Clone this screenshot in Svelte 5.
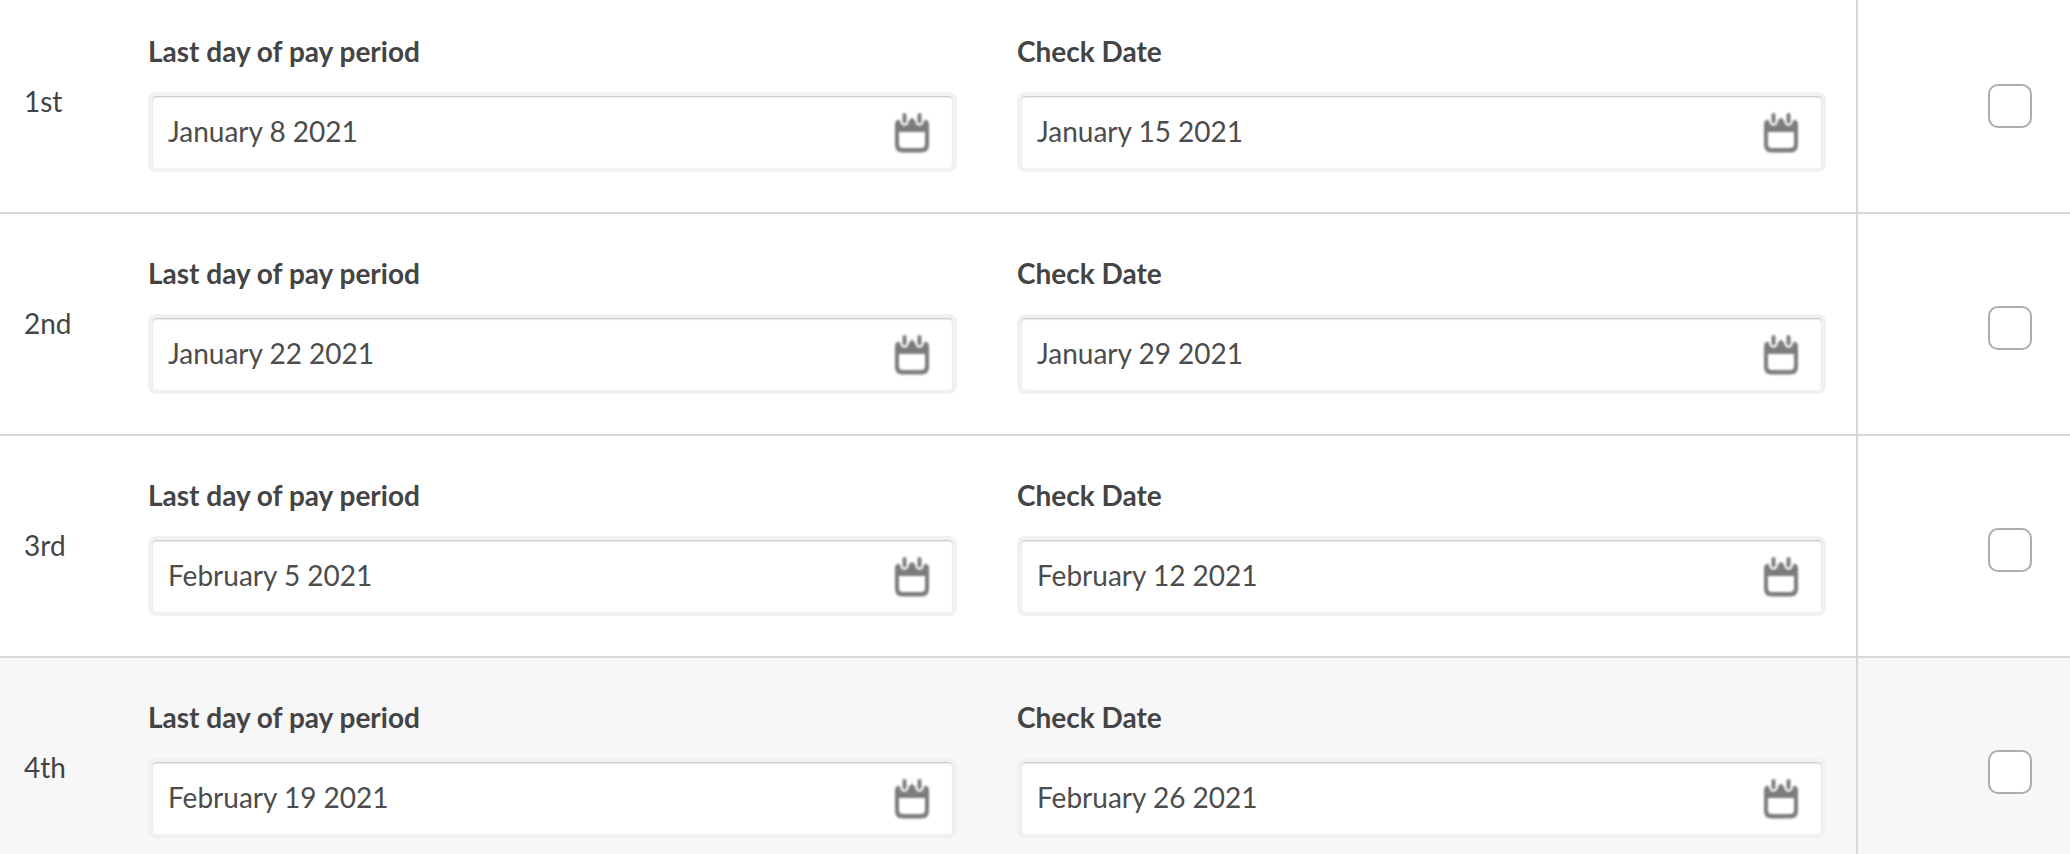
<script>
  let periods = $state([
    { name: '1st', lastDay: 'January 8 2021', checkDate: 'January 15 2021', selected: false },
    { name: '2nd', lastDay: 'January 22 2021', checkDate: 'January 29 2021', selected: false },
    { name: '3rd', lastDay: 'February 5 2021', checkDate: 'February 12 2021', selected: false },
    { name: '4th', lastDay: 'February 19 2021', checkDate: 'February 26 2021', selected: false, shaded: true }
  ]);

  const fields = [
    { key: 'lastDay', label: 'Last day of pay period' },
    { key: 'checkDate', label: 'Check Date' }
  ];
</script>

<main>
  <table>
    <tbody>
      {#each periods as period (period.name)}
        <tr class:shaded={period.shaded}>
          <th scope="row">{period.name}</th>
          <td class="dates">
            <div class="fields">
              {#each fields as field (field.key)}
                <div class="field">
                  <label for="{field.key}-{period.name}">{field.label}</label>
                  <div class="date-box">
                    <input type="text" id="{field.key}-{period.name}" bind:value={period[field.key]} />
                    <button type="button" aria-label="Open calendar">
                      <svg viewBox="0 0 34 42" width="34" height="42" aria-hidden="true">
                        <path
                          class="body"
                          fill-rule="evenodd"
                          d="M3 8.5 L5 9.5 C5.500 16.500 13.400 16.500 14 9.500 L17 6.500 L20 9.500 C20.600 16.500 28.500 16.500 29 9.500 L31 8.500 Q34 10 34 12.500 V34 Q34 41.500 26.500 41.500 H7.500 Q0 41.500 0 34 V12.500 Q0 10 3 8.500 Z M4 21 V33 Q4 37 8 37 H26 Q30 37 30 33 V21 Z"
                        />
                        <path class="ring" d="M9.500 4 V10.500 M24.500 4 V10.500" />
                      </svg>
                    </button>
                  </div>
                </div>
              {/each}
            </div>
          </td>
          <td class="select">
            <input type="checkbox" aria-label="Select" bind:checked={period.selected} />
          </td>
        </tr>
      {/each}
    </tbody>
  </table>
</main>

<style>
  :global(body) {
    background: #fff;
  }

  main {
    height: 100vh;
    overflow: hidden;
    color: #444;
    font-family: Lato, sans-serif;
    font-size: 28px;
    line-height: 34px;
  }

  table {
    width: 100%;
    margin-top: -8px;
    border-spacing: 0;
  }

  th,
  td {
    padding: 0;
    border-bottom: 2px solid #d8d8d8;
  }

  .shaded {
    background: #f7f7f7;
  }

  th {
    width: 124px;
    padding: 0 0 2px 24px;
    font-weight: 400;
    text-align: left;
    vertical-align: middle;
  }

  .dates {
    padding: 42px 30px 40px 0;
    border-right: 2px solid #d8d8d8;
  }

  .fields {
    display: flex;
    gap: 60px;
  }

  .field {
    display: flex;
    flex: 1;
    flex-direction: column;
    gap: 24px;
    min-width: 0;
  }

  label {
    font-weight: 700;
  }

  .date-box {
    display: flex;
    align-items: center;
    box-sizing: border-box;
    height: 80px;
    padding: 0 24px 0 16px;
    border: 4px solid #f1f1f1;
    border-radius: 8px;
    background: #fff;
    box-shadow: inset 0 1px 2px #bbb;
  }

  .date-box input {
    flex: 1;
    min-width: 0;
    padding: 0 0 2px;
    border: 0;
    outline: 0;
    background: none;
    color: #4c4c4c;
    font: inherit;
  }

  button {
    display: flex;
    padding: 0;
    border: 0;
    background: none;
    cursor: pointer;
  }

  svg {
    overflow: visible;
    filter: blur(1px);
  }

  .body {
    fill: #7c7c7c;
  }

  .ring {
    fill: none;
    stroke: #7c7c7c;
    stroke-width: 4;
    stroke-linecap: round;
  }

  .select {
    width: 174px;
    padding: 92px 38px 0 0;
    vertical-align: top;
  }

  .select input {
    display: block;
    box-sizing: border-box;
    width: 44px;
    height: 44px;
    margin: 0 0 0 auto;
    border: 2px solid #adadad;
    border-radius: 10px;
    background: #fff;
    appearance: none;
  }

  .select input:checked {
    background: #868686;
  }
</style>
